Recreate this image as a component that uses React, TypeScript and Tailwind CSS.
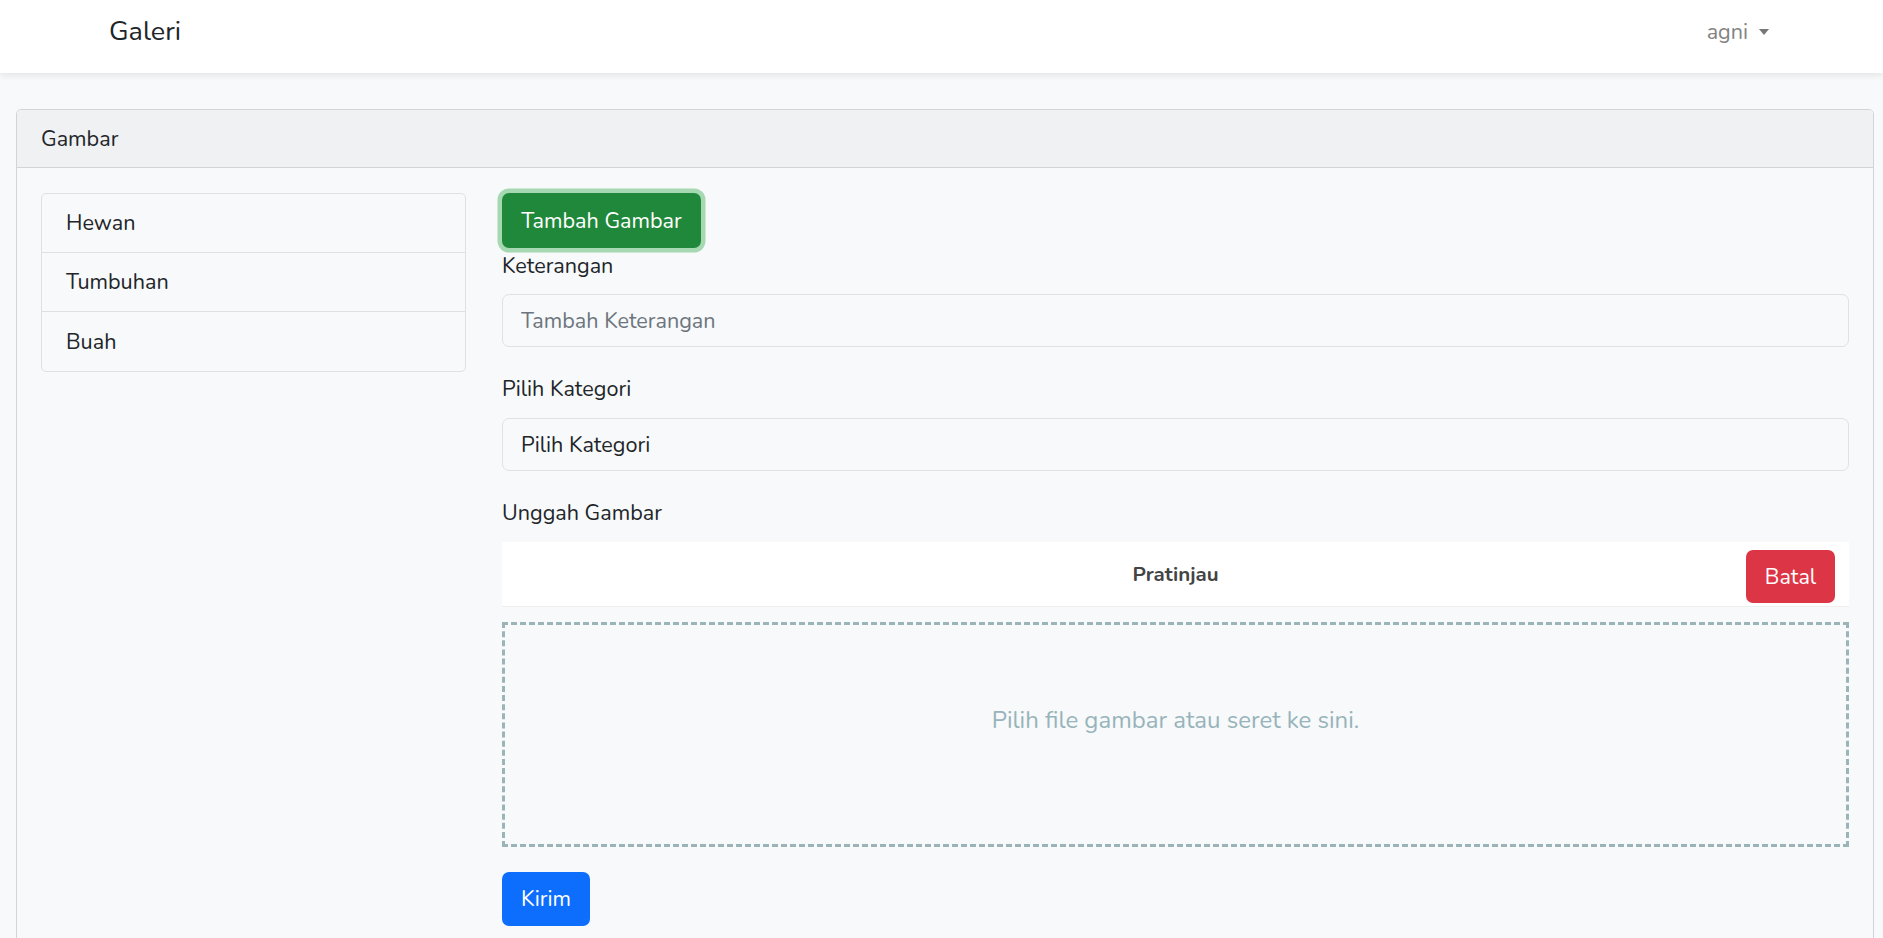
import { useState } from "react";

const categories = ["Hewan", "Tumbuhan", "Buah"];

export default function App() {
  const [keterangan, setKeterangan] = useState("");

  return (
    <div className="min-h-screen bg-[#f8f9fa] font-['Nunito','Lato',sans-serif] text-[21.6px] leading-[32px] text-[#212529]">
      {/* Navbar */}
      <nav className="h-[73px] bg-white shadow-[0_3px_6px_rgba(0,0,0,0.075)] flex items-center justify-between pl-[109px] pr-[114px] pb-[10px]">
        <span className="text-[27px] leading-none text-[#212529]">Galeri</span>
        <button className="flex items-center gap-[11px] text-[#838383]">
          agni
          <span className="inline-block w-0 h-0 border-x-[5.5px] border-x-transparent border-t-[6px] border-t-[#777]" />
        </button>
      </nav>

      <main className="pt-[36px] pl-[16px] pr-[9px]">
        <div className="rounded-[5px] border border-[#d3d4d6] overflow-hidden">
          <div className="h-[58px] flex items-center px-[24px] bg-[#f0f1f3] border-b border-[#d3d4d6]">
            Gambar
          </div>

          <div className="flex gap-[36px] pt-[25px] px-[24px] pb-[24px]">
            {/* Categories */}
            <ul className="w-[425px] shrink-0 self-start rounded-[5px] border border-[#dfe0e2] divide-y divide-[#dfe0e2]">
              {categories.map((c) => (
                <li key={c} className="h-[59px] flex items-center pl-[24px]">
                  {c}
                </li>
              ))}
            </ul>

            {/* Form */}
            <div className="flex-1 min-w-0 flex flex-col items-start">
              <button className="h-[55px] w-[199px] rounded-[7px] bg-[#20883a] text-white shadow-[0_0_0_4.5px_#a6d8b2]">
                Tambah Gambar
              </button>

              <label className="h-[32px] mb-[14px] leading-[36px]">Keterangan</label>
              <input
                value={keterangan}
                onChange={(e) => setKeterangan(e.target.value)}
                placeholder="Tambah Keterangan"
                className="w-full h-[53px] px-[18px] rounded-[7px] border border-[#dee2e6] bg-[#f8f9fa] outline-none placeholder:text-[#6c757d]"
              />

              <label className="mt-[25px] h-[32px] mb-[14px] leading-[34px]">Pilih Kategori</label>
              <select className="w-full h-[53px] px-[18px] rounded-[7px] border border-[#dee2e6] bg-[#f8f9fa] appearance-none outline-none text-[#212529]">
                <option>Pilih Kategori</option>
                {categories.map((c) => (
                  <option key={c}>{c}</option>
                ))}
              </select>

              <label className="mt-[25px] h-[32px] mb-[14px] leading-[34px]">Unggah Gambar</label>
              <div className="relative w-full h-[65px] bg-white border-b border-[#eeeeee] flex items-center justify-center">
                <span className="font-bold text-[20.5px] text-[#444]">Pratinjau</span>
                <button className="absolute right-[14px] top-[8px] h-[53px] w-[89px] rounded-[7px] bg-[#dc3545] text-white">
                  Batal
                </button>
              </div>

              <div className="mt-[15px] w-full h-[225px] border-[3px] border-dashed border-[#9ab4b7] flex items-center justify-center pb-[30px] text-[24px] text-[#97b4ba]">
                Pilih file gambar atau seret ke sini.
              </div>

              <button className="mt-[25px] h-[54px] w-[88px] rounded-[7px] bg-[#0d6efd] text-white">
                Kirim
              </button>
            </div>
          </div>
        </div>
      </main>
    </div>
  );
}
